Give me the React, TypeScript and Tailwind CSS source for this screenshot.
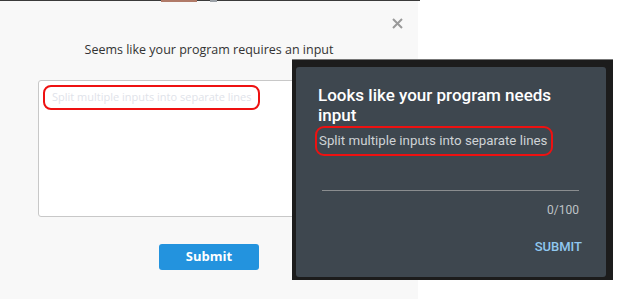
import React from 'react'

const App = () => {
  return (
    <div className="relative w-[640px] h-[299px] bg-white overflow-hidden">
      {/* light modal on the left */}
      <section className="relative w-[418px] h-[299px] bg-[#f8f8f8] flex flex-col items-center font-['Open_Sans',sans-serif]">
        <div className="absolute left-0 top-0 w-[420px] h-[1px] bg-[#3a3a3a] flex">
          <div className="ml-[161px] w-[36px] h-[2px] bg-[#b07a68]" />
          <div className="ml-[13px] w-[7px] h-[2px] bg-[#9aa0a6]" />
        </div>
        <button className="absolute left-[392px] top-[18px] w-[11px] h-[11px]">
          <svg viewBox="0 0 11 11" className="w-[11px] h-[11px]">
            <path d="M1 1 L10 10 M10 1 L1 10" stroke="#9a9a9a" strokeWidth="2" />
          </svg>
        </button>
        <p className="mt-[40px] text-[12.5px] leading-[20px] text-[#333]">
          Seems like your program requires an input
        </p>
        <div className="mt-[20px] w-[342px] h-[137px] bg-white border border-[#c8c8c8] rounded-[3px] pt-[4px] pl-[4px]">
          <div className="w-[217px] h-[25px] border-2 border-[#ee1111] rounded-[8px] flex items-center pl-[7px] whitespace-nowrap text-[11px] text-[#dfe3ea]">
            Split multiple inputs into separate lines
          </div>
        </div>
        <button className="mt-[27px] w-[100px] h-[26px] rounded-[3px] bg-[#2393de] text-white text-[13px] font-bold">
          Submit
        </button>
      </section>

      {/* dark dialog over it */}
      <div className="absolute left-[292px] top-[59px] w-[321px] h-[221px] bg-[#1c1c1c] border-t border-[#777] pt-[7px] pl-[4px] pr-[7px] pb-[3px] font-['Roboto',sans-serif]">
        <div className="w-full h-full bg-[#3e474f] rounded-[3px] flex flex-col pl-[22px] pr-[27px]">
          <h2 className="mt-[18px] text-[17px] leading-[20px] font-medium text-white">
            Looks like your program needs input
          </h2>
          <div className="mt-[1px] -ml-[3px] w-[238px] h-[30px] border-2 border-[#ee1111] rounded-[9px] flex items-center pl-[2px] whitespace-nowrap text-[13.3px] text-[#cfd3d6]">
            Split multiple inputs into separate lines
          </div>
          <div className="mt-[34px] ml-[4px] h-[1px] bg-[#8a8d8f]" />
          <p className="mt-[10px] text-right text-[12px] text-[#bfc3c6]">0/100</p>
          <div className="mt-[18px] -mr-[3px] flex justify-end">
            <button className="text-[13px] font-medium text-[#90c8f0]">SUBMIT</button>
          </div>
        </div>
      </div>
    </div>
  )
}

export default App
